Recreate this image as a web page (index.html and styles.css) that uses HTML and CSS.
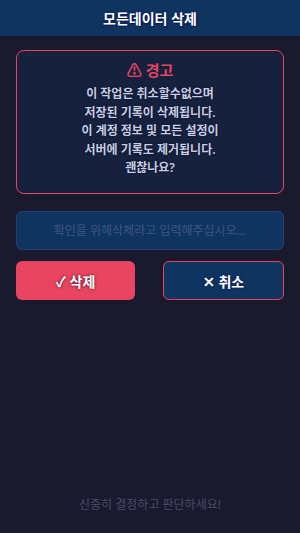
FILE: index.html
```html
<!DOCTYPE html>
<html lang="ko">
<head>
    <meta charset="UTF-8">
    <meta name="viewport" content="width=device-width, initial-scale=1.0">
    <title>모든데이터 삭제</title>
    <link rel="stylesheet" href="styles.css">
</head>
<body>
    <div id="app">
        <header class="topbar">
            <h1>모든데이터 삭제</h1>
        </header>

        <main class="content">
            <div class="warning">
                <h2>⚠ 경고</h2>
                <p>
                    이 작업은 취소할수없으며<br>
                    저장된 기록이 삭제됩니다.<br>
                    이 계정 정보 및 모든 설정이<br>
                    서버에 기록도 제거됩니다.<br>
                    괜찮나요?
                </p>
            </div>

            <input class="confirm" type="text" placeholder="확인을 위해삭제라고 입력해주십시오...">

            <div class="actions">
                <button class="btn danger">✓ 삭제</button>
                <button class="btn cancel">✕ 취소</button>
            </div>
        </main>

        <footer class="note">신중히 결정하고 판단하세요!</footer>
    </div>
</body>
</html>
```

FILE: styles.css
```css
/* reset */
html, body {
    margin: 0;
    padding: 0;
    height: 100%;
}

body {
    background: #1a1a2e;
    font-family: "Noto Sans", "Noto Sans CJK KR", sans-serif;
    color: #c9cde0;
}

#app {
    display: flex;
    flex-direction: column;
    min-height: 100%;
}

.topbar {
    background: #0f3460;
    height: 36px;
    display: flex;
    align-items: center;
    justify-content: center;
}

.topbar h1 {
    margin: 0;
    font-size: 14px;
    font-weight: bold;
    color: #ffffff;
    text-shadow: 0 0 3px #0a1a55, 1px 1px 1px #0a1a55;
}

.content {
    padding: 14px 16px 0;
}

/* red box with the message */
.warning {
    height: 144px;
    box-sizing: border-box;
    border: 1.5px solid #e94560;
    border-radius: 8px;
    background: #16213e;
    text-align: center;
    padding: 8px 8px;
}

.warning h2 {
    margin: 0 0 5px;
    font-size: 15px;
    font-weight: bold;
    color: #e94560;
}

.warning p {
    margin: 0;
    font-size: 12px;
    font-weight: 600;
    line-height: 18.6px;
    color: #c9cde0;
    text-shadow: 0 0 2px #0a1030;
}

.confirm {
    display: block;
    width: 100%;
    height: 39px;
    box-sizing: border-box;
    margin-top: 17px;
    background: #0f3460;
    border: 1px solid #2c3d6e;
    border-radius: 6px;
    text-align: center;
    font-family: inherit;
    font-size: 12px;
    color: #c9cde0;
}

.confirm::placeholder {
    color: #41548a;
}

.actions {
    display: flex;
    gap: 28px;
    margin-top: 11px;
}

.btn {
    flex: 1;
    height: 39px;
    border-radius: 6px;
    font-family: inherit;
    font-size: 14px;
    font-weight: bold;
    color: #ffffff;
    text-shadow: 0 0 3px #3a0a20;
}

.danger {
    background: #e94560;
    border: none;
}

.cancel {
    background: #0f3460;
    border: 1.5px solid #e94560;
    text-shadow: 0 0 3px #0a1a55;
}

.note {
    margin-top: auto;
    padding-bottom: 20px;
    text-align: center;
    font-size: 12px;
    color: #4a4b6b;
}
```
